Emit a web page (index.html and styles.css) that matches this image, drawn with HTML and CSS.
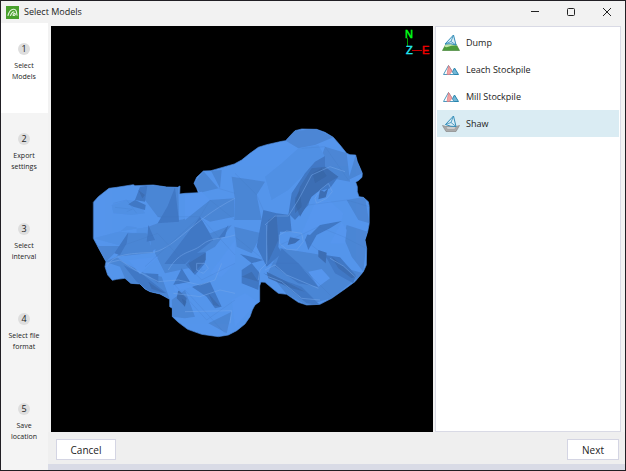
FILE: index.html
```html
<!DOCTYPE html>
<html lang="en">
<head>
<meta charset="utf-8">
<title>Select Models</title>
<link rel="stylesheet" href="styles.css">
</head>
<body>
<div class="window">
  <header class="titlebar">
    <svg class="logo" viewBox="0 0 13 13" aria-hidden="true">
      <rect width="13" height="13" fill="#48a02c"/>
      <path d="M2 9.500C3 6 5 3.500 7.500 3.300S10.500 5 11 9.300M4.500 9.500C5 8 6 6 8 5.800M7 9.200C7.200 7.500 9 6.800 9.300 8S8 9.800 7 9.200" fill="none" stroke="#e6f4df" stroke-width="1.100" stroke-linecap="round"/>
    </svg>
    <h1 class="title">Select Models</h1>
    <div class="controls">
      <button class="control" aria-label="Minimize"><svg viewBox="0 0 10 10"><path d="M1 4.500H9"/></svg></button>
      <button class="control" aria-label="Maximize"><svg viewBox="0 0 10 10"><rect x="1.500" y="1.500" width="7" height="7" rx="1"/></svg></button>
      <button class="control" aria-label="Close"><svg viewBox="0 0 10 10"><path d="M1 1L9 9M9 1L1 9"/></svg></button>
    </div>
  </header>
  <div class="body">
    <ol class="steps">
      <li class="step current" aria-current="step"><span class="number">1</span><span>Select<br>Models</span></li>
      <li class="step"><span class="number">2</span><span>Export<br>settings</span></li>
      <li class="step"><span class="number">3</span><span>Select<br>interval</span></li>
      <li class="step"><span class="number">4</span><span>Select file<br>format</span></li>
      <li class="step"><span class="number">5</span><span>Save<br>location</span></li>
    </ol>
    <div class="page">
      <main class="content">
        <div class="viewport">
          <svg class="scene" viewBox="51 26 382 406" role="img" aria-label="Model plan view">
            <defs>
              <clipPath id="pit"><path id="outline" d="M25 247L40 230 72 205 95 202 145 194 150 197 205 195 245 201 278 202 285 198 284 222 300 220 340 218 335 205 327 190 335 172 355 153 378 152 448 132 470 120 495 100 520 82 545 74 590 64 602 62 610 53 630 32 650 27 695 28 720 37 745 52 765 75 785 100 795 104 812 105 817 125 825 143 832 160 831 172 820 182 812 186 817 200 817 215 822 230 835 232 850 245 853 260 853 310 848 335 840 360 845 385 844 435 835 455 810 485 780 507 740 535 705 553 665 555 640 547 605 523 580 520 565 508 540 487 528 486 524 498 524 545 510 555 502 570 495 590 480 612 455 632 430 645 400 650 350 643 308 628 280 607 262 590 262 565 254 560 254 538 225 522 195 515 180 507 165 492 137 490 120 475 95 478 82 481 68 465 60 440 63 425 45 392 25 355Z"/></clipPath>
            </defs>
            <g transform="translate(85 120) scale(.33333)">
              <g clip-path="url(#pit)">
                <rect x="20" y="20" width="840" height="640" fill="#5595ec"/>
                <g fill="#4c86d5">
                  <path d="M185 195L280 200 282 308 218 290 180 240ZM345 218L400 205 355 153 327 190ZM378 152L410 150 405 205ZM282 308L375 240 448 235 448 290 375 305 345 290 200 395 190 320 218 310Z"/>
                  <path d="M218 310L345 290 375 340 440 315 390 380 355 400 330 440 240 460 210 400ZM128 340L185 340 205 398 95 410 115 375Z"/>
                  <path d="M25 378L110 378 63 425ZM60 425L95 410 120 430 180 460 230 470 255 540 195 515 137 490 120 475 105 440ZM440 170L540 185 515 225 450 240ZM450 240L515 225 530 300 448 300Z"/>
                  <path d="M602 62L630 32 695 28 745 52 690 75 640 85ZM720 80L785 100 795 185 740 175 700 135ZM812 105L832 160 790 180ZM785 240L840 230 853 310 820 300Z"/>
                  <path d="M785 315L848 335 835 455 800 410 775 350ZM585 385L680 400 735 410 800 450 835 460 740 535 665 555 605 523 550 455ZM260 540L300 510 330 590 300 595 262 590ZM370 610L440 575 425 640ZM448 320L530 340 500 400 455 380Z"/>
                </g>
                <g fill="#5190e4"><path d="M80 255L130 240 160 245 180 280 140 285 85 280ZM105 335L125 318 155 322 155 340ZM25 355L110 378 128 340 185 340 190 320 100 335ZM640 85L700 75 720 110 660 160 610 210 560 240 540 170 590 130Z"/></g>
                <g fill="#4279c5">
                  <path d="M248 258L270 202 282 305 218 310ZM345 290L385 360 335 400 300 432 238 432ZM330 400L362 396 360 430 330 465 303 435ZM165 200L187 197 180 245 150 240ZM130 253L150 240 182 255 180 270 145 260Z"/>
                  <path d="M130 337L125 370 105 405 88 400ZM190 315L210 360 185 365ZM115 435L175 465 245 520 195 515 155 485ZM180 460L220 462 220 490ZM290 445L315 485 265 495ZM400 355L430 315 420 350ZM320 500L375 485 410 560 390 565 365 530Z"/>
                  <path d="M620 220L660 160 690 125 720 108 720 150 680 220 645 280 610 285ZM720 145L760 170 735 205 680 220 670 255 630 300 610 280 650 220ZM535 270L575 280 615 285 620 335 585 335 580 380 590 400 545 440 515 380Z"/>
                  <path d="M660 360L675 325 730 305 770 303 735 325 695 345 670 390ZM720 405L765 412 812 465 805 490 750 460ZM590 385L640 430 700 500 640 490 570 440ZM535 460L580 475 650 500 705 555 665 550 605 500ZM470 450L500 430 525 460 520 510 470 490ZM465 402L535 420 500 430Z"/>
                </g>
                <g fill="#3e6fb4">
                  <path d="M645 200L680 145 720 140 760 170 735 185 680 230 645 290 630 250ZM550 300L575 285 580 360 550 425 545 350ZM160 210L180 225 172 235ZM280 510L305 535 300 560 275 535ZM310 430L362 398 362 420 325 460ZM545 455L595 480 660 515 620 505 550 475ZM740 410L795 455 812 470 800 475 760 445ZM370 520L405 560 385 555Z"/>
                  <path d="M705 210L718 215 730 205 722 232 700 238ZM615 352L645 358 630 370 608 375ZM700 390L725 398 722 430 700 410ZM470 470L500 455 520 485Z"/>
                </g>
                <g fill="#5796ee">
                  <path d="M690 248L735 242 775 280 770 303 705 315 675 345 650 340ZM300 225L350 215 375 240 300 300ZM375 460L450 360 450 430 410 470ZM670 455L710 447 735 475 700 500ZM130 420L220 410 165 462ZM770 305L785 330 780 370 735 370ZM265 495L300 490 325 500 270 515ZM440 540L480 520 520 545 450 620Z"/>
                </g>
                <g fill="#315d9c" opacity=".35">
                  <path d="M630 235L645 210 650 260 630 280ZM683 160L710 145 725 168 690 190ZM190 485L240 520 200 506ZM290 535L305 545 298 560ZM570 478L615 495 580 488Z"/>
                </g>
                <g fill="none" stroke="#73a6ea" stroke-width="2" stroke-linejoin="round" opacity=".8">
                  <path d="M65 440C80 405 130 400 195 398S320 300 450 235M63 430L105 420 150 450 220 485 280 480 345 495 390 480 410 430M250 450C285 390 320 400 350 375S405 360 450 345"/>
                  <path d="M540 315L570 288 610 288 640 240 680 165 735 140 780 155M545 315L545 430 525 450 520 480M540 450L570 435 605 465 700 505M550 470L590 485 650 535 705 540M265 520L345 530 405 510 450 520"/>
                  <path d="M690 235L705 210 730 190 742 215 725 235 695 250ZM583 345L605 333 650 340 655 365 635 390 605 388 583 370ZM735 415L775 438 810 470M300 575L440 572 435 610M335 430L360 430 370 445 355 460 335 450Z"/>
                </g>
                <g fill="none" stroke="#3d70b8" stroke-width="1" opacity=".5">
                  <path d="M110 378L218 340 310 440 350 480 450 430M180 440L345 290 450 405M218 290L345 290 375 240 450 300M85 250L125 240 155 280M450 160L515 225 535 270M450 350L550 430 640 430 740 530M650 85L720 80 790 180M670 255L785 240 853 260M585 375L700 320 775 350 844 385M660 360L800 470M300 510L420 640M265 490L365 600 450 540M130 340L185 340M400 205L450 220"/>
                  <path d="M345 438L352 447 344 455 361 451M715 210L700 228 723 222M615 350L640 359 610 370M90 262L142 268 125 275"/>
                </g>
              </g>
              <use href="#outline" fill="none" stroke="#4f8cdf" stroke-width="2"/>
            </g>
            <path d="M407.500 38V47" stroke="#00a000"/>
            <path d="M412 50.500H422" stroke="#c00000"/>
            <g class="axis"><text x="405" y="38" fill="#00ff18" stroke="#00ff18">N</text><text x="406" y="54" fill="#22e8f0" stroke="#22e8f0">Z</text><text x="422" y="54" fill="#f00000" stroke="#f00000">E</text></g>
          </svg>
        </div>
        <ul class="models">
          <li><button class="model"><svg class="icon" viewBox="0 0 18 18" aria-hidden="true">
            <path d="M.5 16.500L4 10H14L17.500 16.500Z" fill="#4b9c3a" stroke="#3a7b2d" stroke-width=".6"/><path d="M2.500 12.500L4 9.500H14L15 11.500Q10 11 7 12.500T2.500 12.500Z" fill="#bfe3a8"/><path d="M3 10L11.500 1 14 11Q9 9 3 10Z" fill="#d9edf6" stroke="#348db8"/><path d="M11.500 1L9 7.500 3 10M9 7.500L14 11" fill="none" stroke="#348db8" stroke-width=".8"/></svg>Dump</button></li>
          <li><button class="model"><svg class="icon" viewBox="0 0 18 18" aria-hidden="true">
            <path d="M9 13.500L12.500 7 16.500 13.500Z" fill="#73b7d6" stroke="#2785ae"/><path d="M1.500 13.500L6.500 4.500 12 13.500Z" fill="#fff" stroke="#4d99be"/><path d="M6.500 4.500L5 13.500H7.500L10 10Z" fill="#f3a2a2" stroke="#d87880" stroke-width=".7"/></svg>Leach Stockpile</button></li>
          <li><button class="model"><svg class="icon" viewBox="0 0 18 18" aria-hidden="true">
            <path d="M9 13.500L12.500 7 16.500 13.500Z" fill="#73b7d6" stroke="#2785ae"/><path d="M1.500 13.500L6.500 4.500 12 13.500Z" fill="#fff" stroke="#4d99be"/><path d="M6.500 4.500L5 13.500H7.500L10 10Z" fill="#f3a2a2" stroke="#d87880" stroke-width=".7"/></svg>Mill Stockpile</button></li>
          <li><button class="model selected" aria-pressed="true"><svg class="icon" viewBox="0 0 18 18" aria-hidden="true">
            <path d="M.5 10.500L4 11.500H14L17.500 10.500 14 16.500H4Z" fill="#aaa" stroke="#888" stroke-width=".7"/><path d="M4 12L5.500 14.500H12.500L14 12" fill="#ccc" stroke="#999" stroke-width=".6"/><path d="M3.500 9.500L11.500 1 14 11.500Q9 12 3.500 9.500Z" fill="#d9edf6" stroke="#348db8"/><path d="M11.500 1L9 7.500 3.500 9.500M9 7.500L14 11.500" fill="none" stroke="#348db8" stroke-width=".8"/></svg>Shaw</button></li>
        </ul>
      </main>
      <footer class="footer">
        <button class="action cancel">Cancel</button>
        <button class="action">Next</button>
      </footer>
      <div class="strip"></div>
    </div>
  </div>
</div>
</body>
</html>
```
FILE: styles.css
```css
* { box-sizing: border-box; }
body { margin: 0; font: 10px/14px "Open Sans", "Noto Sans", sans-serif; color: #222; }
button { font: inherit; color: inherit; }
.window { display: flex; flex-direction: column; height: 100vh; border: 1px solid #211f24; background: #f2f2f2; }
.titlebar { display: flex; align-items: center; flex: none; height: 22px; padding-left: 5px; }
.logo { width: 13px; height: 13px; }
.title { margin: 0 0 0 5px; font-size: 9px; font-weight: 400; }
.controls { display: flex; margin-left: auto; }
.control { display: flex; align-items: center; justify-content: center; width: 36px; height: 20px; padding: 0; border: 0; background: none; }
.control svg { width: 10px; height: 10px; fill: none; stroke: #222; }
.body { display: flex; flex: 1; min-height: 0; }
.steps { display: flex; flex-direction: column; flex: none; width: 47px; margin: 0; padding: 0; list-style: none; background: #f4f4f4; overflow: hidden; }
.step { display: flex; flex: none; flex-direction: column; align-items: center; gap: 5px; height: 90px; padding: 20px 1px 0 0; font-size: 7px; line-height: 11px; text-align: center; white-space: nowrap; }
.current { background: #fff; }
.number { width: 12px; height: 12px; border-radius: 50%; background: #dedede; font-size: 9px; line-height: 12px; }
.page { display: flex; flex: 1; flex-direction: column; min-width: 0; }
.content { display: flex; flex: 1; gap: 2px; min-height: 0; padding: 3px 4px 0 3px; }
.viewport { flex: 1; min-width: 0; background: #000; }
.scene { display: block; width: 100%; height: 100%; }
.axis { font: 11px "Liberation Sans", sans-serif; stroke-width: .5px; }
.models { flex: none; width: 186px; margin: 0; padding: 2px 1px; border: 1px solid #d9dae5; background: #fff; list-style: none; }
.model { display: flex; align-items: center; gap: 6px; width: 100%; height: 27px; padding: 0 5px; border: 0; background: none; font-size: 9px; text-align: left; }
.selected { background: #daecf3; }
.icon { width: 18px; height: 18px; }
.footer { display: flex; justify-content: space-between; flex: none; height: 32px; padding: 7px 6px 4px 8px; background: #efefef; }
.action { width: 52px; padding: 0; border: 1px solid #d4d5e3; background: #fff; font-size: 10px; }
.cancel { width: 60px; }
.strip { flex: none; height: 6px; background: #d9dbe6; }
```
